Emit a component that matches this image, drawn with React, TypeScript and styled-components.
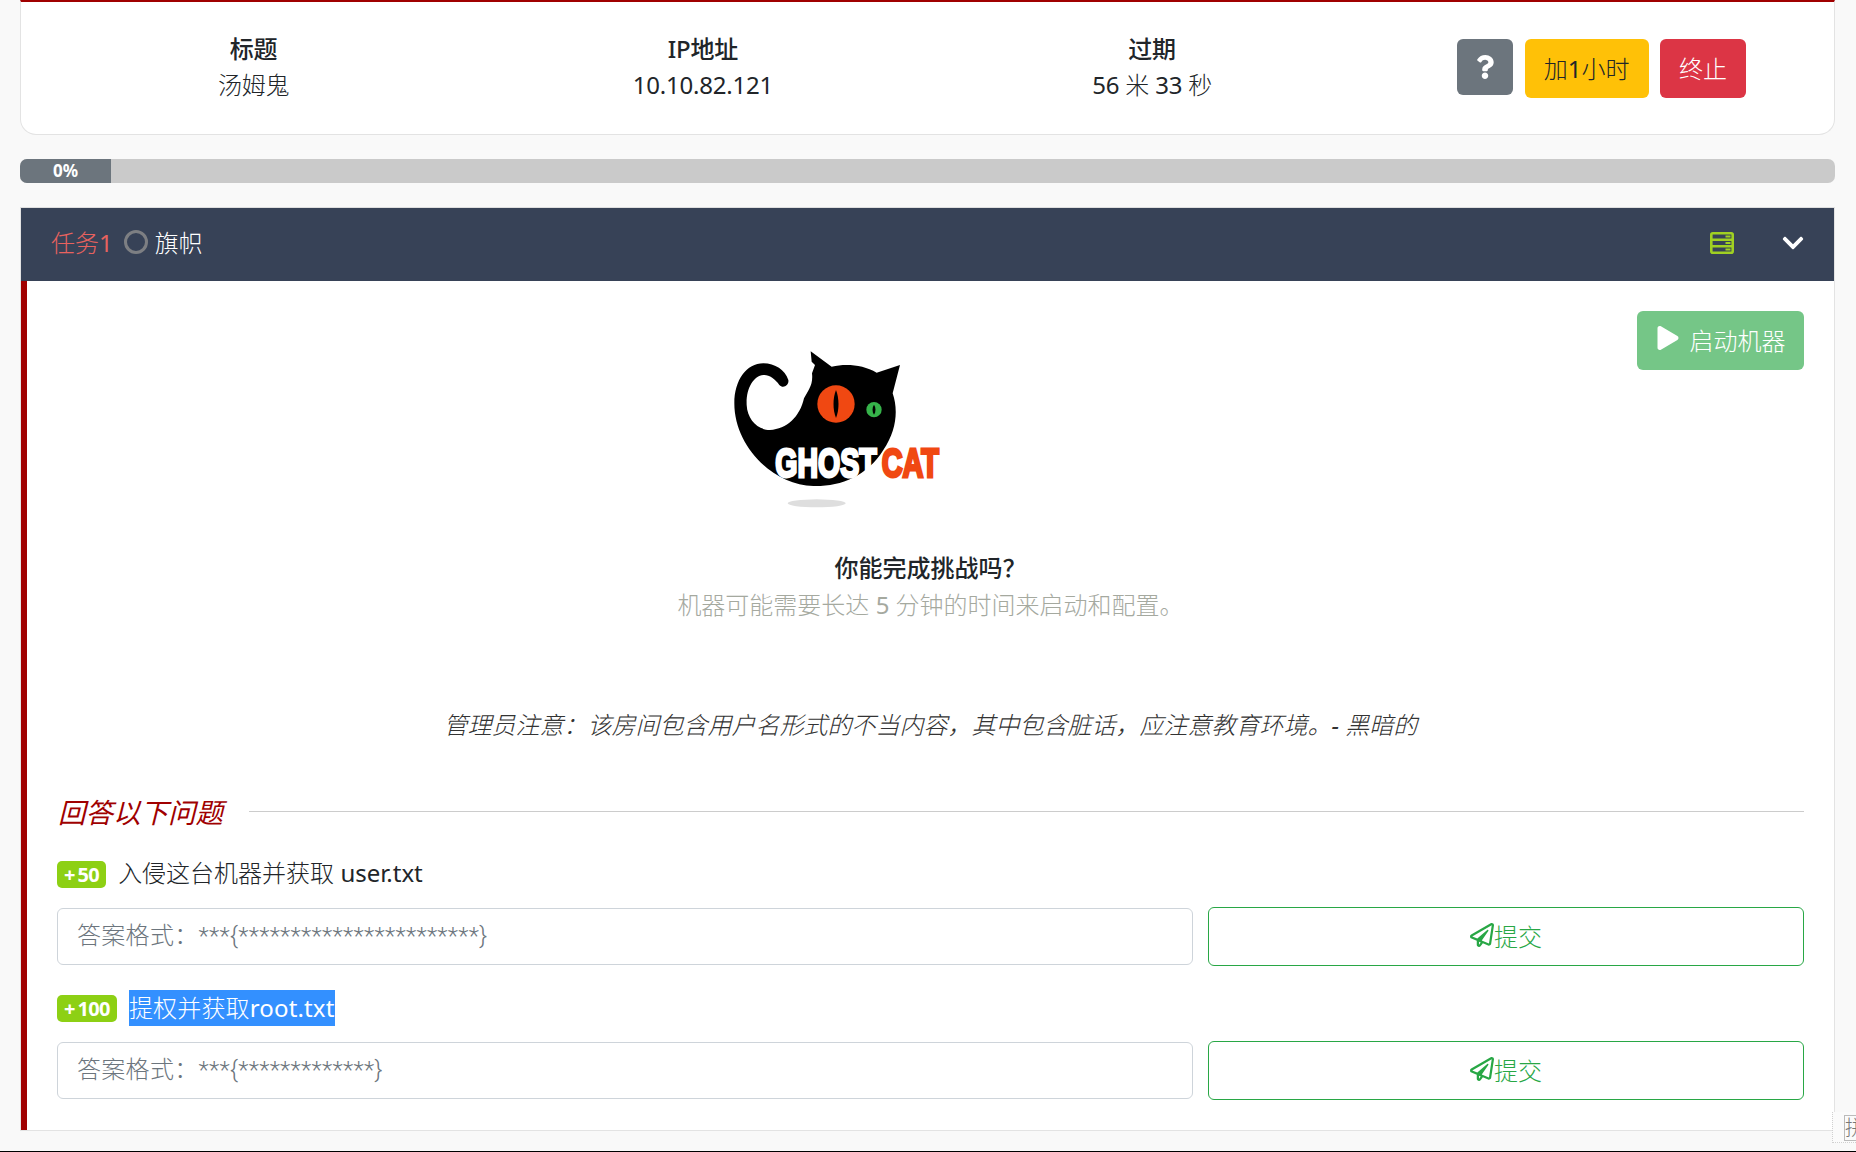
import styled, { createGlobalStyle } from "styled-components";
import { FaChevronDown, FaPlay, FaQuestion, FaRegPaperPlane } from "react-icons/fa";

const GlobalStyle = createGlobalStyle`
  * { box-sizing: border-box; }
  html, body { margin: 0; padding: 0; background: #f9f9f9; }
  body {
    font-family: "Noto Sans", "Noto Sans CJK SC", sans-serif;
    font-size: 24px;
    font-weight: 300;
    color: #212529;
  }
  input::placeholder { color: #6c757d; opacity: 1; }
`;

const Page = styled.div`
  height: 1152px;
  padding: 0 21px 0 20px;
  border-bottom: 1px solid #000;
  position: relative;
  overflow: hidden;
`;

// latin text and digits sit at regular weight next to the light CJK
const Latin = styled.span`
  font-weight: 400;
`;

const InfoCard = styled.section`
  height: 135px;
  padding: 0 8px;
  display: grid;
  grid-template-columns: repeat(4, 1fr);
  align-items: center;
  background: #fff;
  border: 1px solid #e3e3e3;
  border-top: 2px solid #a00000;
  border-radius: 0 0 16px 16px;
`;

const InfoCol = styled.div`
  text-align: center;
  line-height: 36px;
  margin-top: -2px;
  letter-spacing: -0.2px;
`;

const InfoTitle = styled.div`
  font-weight: 500;
`;

const ButtonGroup = styled.div`
  display: flex;
  justify-content: center;
  align-items: center;
  gap: 11px;
`;

const ActionButton = styled.button<{ $bg: string; $fg: string }>`
  height: 59px;
  padding: 0 19.25px 2px;
  border: 0;
  border-radius: 6px;
  background: ${(p) => p.$bg};
  color: ${(p) => p.$fg};
  font: inherit;
`;

const HelpButton = styled.button`
  width: 56px;
  height: 56px;
  margin: -2px 1px 0 0;
  display: flex;
  align-items: center;
  justify-content: center;
  border: 0;
  border-radius: 6px;
  background: #6c757d;
  color: #fff;
`;

const Progress = styled.div`
  height: 24px;
  margin-top: 24px;
  background: #cacaca;
  border-radius: 7px;
  overflow: hidden;
`;

const ProgressFill = styled.div`
  height: 100%;
  background: #6c757d;
  color: #fff;
  font-size: 17px;
  font-weight: 700;
  line-height: 24px;
  text-align: center;
`;

const Task = styled.section`
  margin-top: 24px;
  background: #fff;
  border: 1px solid #e3e3e3;
  border-top-color: #dfdfdf;
`;

const TaskHeader = styled.header`
  height: 73px;
  padding: 0 29px 6px 30px;
  display: flex;
  align-items: center;
  background: #374257;
  color: #fff;
`;

const TaskNumber = styled.span`
  color: #e8625f;
`;

const StatusRing = styled.span`
  width: 24px;
  height: 24px;
  margin: 0 7px 0 11px;
  border: 3px solid #7d7f83;
  border-radius: 50%;
`;

const HeaderIcons = styled.div`
  margin: 2px 0 0 auto;
  display: flex;
  align-items: center;
  gap: 47px;
`;

const TaskBody = styled.div`
  padding: 30px;
  border-left: 6px solid #a00000;
`;

const StartRow = styled.div`
  display: flex;
  justify-content: flex-end;
`;

const StartButton = styled.button`
  width: 167px;
  height: 59px;
  padding: 0 0 2px;
  display: flex;
  align-items: center;
  justify-content: center;
  gap: 10px;
  border: 0;
  border-radius: 6px;
  background: #75c687;
  color: #fff;
  font: inherit;

  svg { margin-top: -4px; }
`;

const LogoBox = styled.div`
  display: flex;
  justify-content: center;
  margin-top: -40px;
`;

const ChallengeTitle = styled.div`
  margin-top: 30px;
  text-align: center;
  line-height: 36px;
  font-weight: 500;
`;

const ChallengeSub = styled.div`
  margin-top: 1px;
  text-align: center;
  line-height: 36px;
  color: #a5a99f;
`;

const Note = styled.div`
  margin-top: 84px;
  text-align: center;
  font-style: italic;
  line-height: 36px;
  color: #333;
`;

const SectionHead = styled.div`
  margin-top: 48px;
  height: 40px;
  padding-left: 1px;
  display: flex;
  align-items: center;
  gap: 26px;
`;

const SectionTitle = styled.h4`
  margin: 0;
  font-size: 27.5px;
  font-weight: 400;
  font-style: italic;
  color: #a00000;
  white-space: nowrap;
`;

const SectionRule = styled.div`
  flex: 1;
  height: 1px;
  background: #cccccc;
`;

const Question = styled.div`
  margin-top: 25px;

  & + & { margin-top: 24px; }
`;

const QuestionRow = styled.div`
  height: 36px;
  display: flex;
  align-items: center;
  gap: 12px;
`;

const QuestionText = styled.span`
  margin-top: -5px;
`;

const Points = styled.span`
  height: 27px;
  padding: 0 7px;
  display: inline-flex;
  align-items: center;
  border-radius: 5px;
  background: #8dd014;
  color: #fff;
  font-size: 20px;
  font-weight: 700;
  letter-spacing: -0.6px;
  word-spacing: -2px;
`;

const Selected = styled.span`
  line-height: 36px;
  background: #3390ff;
  color: #fff;
  letter-spacing: 0.15px;
`;

const AnswerRow = styled.form`
  margin-top: 15px;
  display: grid;
  grid-template-columns: 1135.5px 1fr;
  gap: 15.5px;
  align-items: center;
`;

const AnswerInput = styled.input`
  width: 100%;
  height: 57px;
  padding: 0 19px 2px;
  border: 1px solid #ced4da;
  border-radius: 6px;
  background: #fff;
  font: inherit;
  font-family: Roboto, "Noto Sans CJK SC", sans-serif;
  letter-spacing: 0.3px;
  outline: none;
`;

const SubmitButton = styled.button`
  height: 59px;
  padding: 0 0 3px;
  display: flex;
  align-items: center;
  justify-content: center;
  border: 1px solid #28a745;
  border-radius: 6px;
  background: #fff;
  color: #28a745;
  font: inherit;
`;

const ImeBox = styled.div`
  position: absolute;
  right: 0;
  bottom: 8px;
  width: 24px;
  height: 31px;
  padding: 3px 0 0 11px;
  border-left: 1px dotted #d0d0d0;
  border-bottom: 1px dotted #d0d0d0;
  background: #fbfbfb;
`;

const ImeGlyph = styled.div`
  width: 13px;
  height: 26px;
  overflow: hidden;
  border: 1px solid #bbb;
  border-right: 0;
  color: #777;
  font-size: 20px;
  line-height: 24px;
`;

function GhostCatLogo() {
  return (
    <svg width="460" height="190" viewBox="3 0 1380 570" aria-label="Ghostcat">
      <path
        fill="#000"
        d="M332 64 L395 110 C440 100 490 105 530 128 L600 105 L578 190 C595 240 590 300 550 360 C500 440 420 470 340 468 C220 465 103 350 103 220 C103 150 140 100 190 100 C225 100 255 120 265 150 C268 165 250 178 238 165 C225 145 205 133 190 135 C160 138 138 175 140 225 C142 270 175 300 210 300 C260 298 300 260 312 205 C325 180 340 165 336 130 L345 105 L335 95 Z"
      />
      <circle cx="408" cy="222" r="56" fill="#f04812" />
      <path fill="#000" d="M408 180 C418 205 418 240 408 264 C398 240 398 205 408 180 Z" />
      <circle cx="522" cy="239" r="23" fill="#36b34a" />
      <path fill="#000" d="M522 224 C528 232 528 246 522 254 C516 246 516 232 522 224 Z" />
      <text
        x="226"
        y="441"
        fill="#fff"
        stroke="#fff"
        strokeWidth="9"
        fontFamily="Liberation Sans"
        fontWeight="700"
        fontSize="124"
        textLength="304"
        lengthAdjust="spacingAndGlyphs"
      >
        GHOST
      </text>
      <text
        x="545"
        y="441"
        fill="#f04812"
        stroke="#f04812"
        strokeWidth="9"
        fontFamily="Liberation Sans"
        fontWeight="700"
        fontSize="124"
        textLength="172"
        lengthAdjust="spacingAndGlyphs"
      >
        CAT
      </text>
      <ellipse cx="350" cy="520" rx="87" ry="12" fill="#dedede" />
    </svg>
  );
}

function ServerIcon() {
  return (
    <svg width="24" height="22" viewBox="0 0 24 22" fill="none">
      <rect x="1.3" y="1.3" width="21.4" height="19.4" rx="1.5" stroke="#a0d022" strokeWidth="2.6" />
      <path d="M1 7.8H23M1 14.2H23" stroke="#a0d022" strokeWidth="2.4" />
      <path d="M15.5 3.6h5v2h-5zM15.5 10h5v2h-5zM15.5 16.4h5v2h-5z" fill="#a0d022" />
    </svg>
  );
}

function Answer({ placeholder }: { placeholder: string }) {
  return (
    <AnswerRow>
      <AnswerInput placeholder={placeholder} />
      <SubmitButton type="button">
        <FaRegPaperPlane size={24} />
        提交
      </SubmitButton>
    </AnswerRow>
  );
}

export default function App() {
  return (
    <Page>
      <GlobalStyle />
      <InfoCard>
        <InfoCol>
          <InfoTitle>标题</InfoTitle>
          <div>汤姆鬼</div>
        </InfoCol>
        <InfoCol>
          <InfoTitle>IP地址</InfoTitle>
          <div><Latin>10.10.82.121</Latin></div>
        </InfoCol>
        <InfoCol>
          <InfoTitle>过期</InfoTitle>
          <div><Latin>56</Latin> 米 <Latin>33</Latin> 秒</div>
        </InfoCol>
        <ButtonGroup>
          <HelpButton>
            <FaQuestion size={24} />
          </HelpButton>
          <ActionButton $bg="#ffc107" $fg="#212529">加<Latin>1</Latin>小时</ActionButton>
          <ActionButton $bg="#dc3545" $fg="#fff">终止</ActionButton>
        </ButtonGroup>
      </InfoCard>

      <Progress>
        <ProgressFill style={{ width: 91 }}>0%</ProgressFill>
      </Progress>

      <Task>
        <TaskHeader>
          <TaskNumber>任务<Latin>1</Latin></TaskNumber>
          <StatusRing />
          旗帜
          <HeaderIcons>
            <ServerIcon />
            <FaChevronDown size={24} />
          </HeaderIcons>
        </TaskHeader>
        <TaskBody>
          <StartRow>
            <StartButton>
              <FaPlay size={24} />
              启动机器
            </StartButton>
          </StartRow>
          <LogoBox>
            <GhostCatLogo />
          </LogoBox>
          <ChallengeTitle>你能完成挑战吗？</ChallengeTitle>
          <ChallengeSub>机器可能需要长达 <Latin>5</Latin> 分钟的时间来启动和配置。</ChallengeSub>
          <Note>管理员注意：该房间包含用户名形式的不当内容，其中包含脏话，应注意教育环境。<Latin>-</Latin> 黑暗的</Note>
          <SectionHead>
            <SectionTitle>回答以下问题</SectionTitle>
            <SectionRule />
          </SectionHead>
          <Question>
            <QuestionRow>
              <Points>+ 50</Points>
              <QuestionText>入侵这台机器并获取 <Latin>user.txt</Latin></QuestionText>
            </QuestionRow>
            <Answer placeholder="答案格式：***{***********************}" />
          </Question>
          <Question>
            <QuestionRow>
              <Points>+ 100</Points>
              <Selected>提权并获取<Latin>root.txt</Latin></Selected>
            </QuestionRow>
            <Answer placeholder="答案格式：***{*************}" />
          </Question>
        </TaskBody>
      </Task>
      <ImeBox>
        <ImeGlyph>拼</ImeGlyph>
      </ImeBox>
    </Page>
  );
}
